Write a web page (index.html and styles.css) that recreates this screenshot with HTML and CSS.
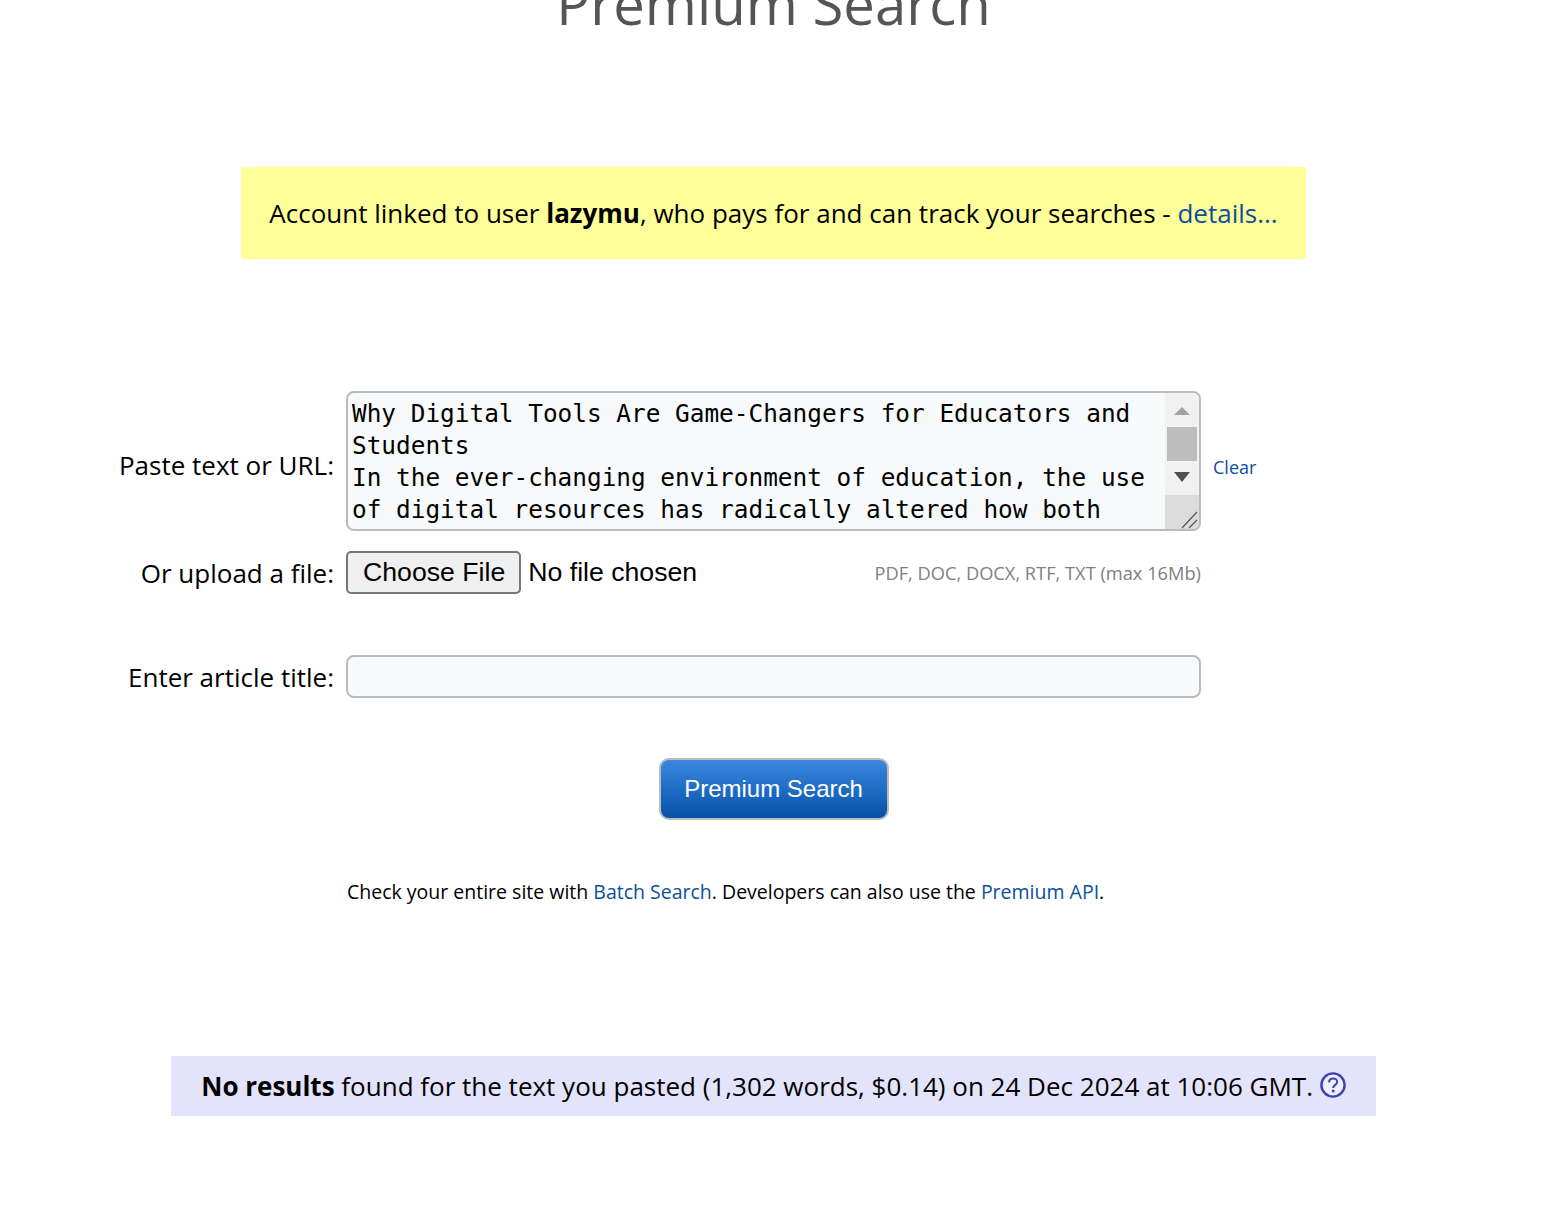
FILE: index.html
```html
<!DOCTYPE html>
<html lang="en">
<head>
<meta charset="utf-8">
<title>Premium Search</title>
<link rel="stylesheet" href="styles.css">
</head>
<body>
<main class="page">
  <h1 class="title">Premium Search</h1>
  <p class="notice">Account linked to user <b>lazymu</b>, who pays for and can track your searches - <a href="#">details...</a></p>
  <form class="form">
    <label class="label label-text" for="text">Paste text or URL:</label>
    <div class="area-box">
      <textarea class="area" id="text" spellcheck="false">Why Digital Tools Are Game-Changers for Educators and Students
In the ever-changing environment of education, the use of digital resources has radically altered how both teachers and students approach learning. Digital tools have become essential in the modern classroom, offering new ways to engage with material, collaborate with peers and track progress over time.</textarea>
      <div class="scrollbar" aria-hidden="true">
        <svg class="sb-btn" viewBox="0 0 34 34" width="34" height="34"><path d="M17 14l8 8H9z" fill="#a3a3a3"/></svg>
        <div class="sb-thumb"></div>
        <svg class="sb-btn" viewBox="0 0 34 34" width="34" height="34"><path d="M9 11h16l-8 10z" fill="#505050"/></svg>
        <svg class="sb-corner" viewBox="0 0 34 34" width="34" height="34"><path d="M17 33L32 17M24 33l8-8" stroke="#555" stroke-width="1.2" fill="none"/></svg>
      </div>
    </div>
    <a class="clear" href="#">Clear</a>

    <label class="label label-file" for="file">Or upload a file:</label>
    <div class="file-row">
      <input class="file" id="file" type="file">
      <span class="hint">PDF, DOC, DOCX, RTF, TXT (max 16Mb)</span>
    </div>

    <label class="label label-title" for="title">Enter article title:</label>
    <input class="title-input" id="title" type="text">
  </form>
  <div class="actions"><button class="submit" type="button">Premium Search</button></div>
  <p class="links">Check your entire site with <a href="#">Batch Search</a>. Developers can also use the <a href="#">Premium API</a>.</p>
  <p class="result"><b>No results</b> found for the text you pasted (1,302 words, $0.14) on 24 Dec 2024 at 10:06 GMT.
    <svg class="help" viewBox="0 0 26 26" width="26" height="26" aria-hidden="true"><circle cx="13" cy="13" r="11.6" fill="#eeeefc" stroke="#4040b4" stroke-width="2.4"/><path d="M9 10.4c.2-2.6 2-4 4.2-4s4 1.4 4 3.4c0 1.6-1 2.5-2.2 3.3-1.2.8-1.8 1.4-1.8 2.9" fill="none" stroke="#4040b4" stroke-width="2"/><circle cx="13.2" cy="19" r="1.5" fill="#4040b4"/></svg>
  </p>
</main>
</body>
</html>
```
FILE: styles.css
```css
* { box-sizing: border-box; }
html, body { margin: 0; padding: 0; background: #fff; }
body { font-family: "Open Sans", sans-serif; color: #000; overflow: hidden; height: 1206px; }
a { color: #0b4f9e; text-decoration: none; }
.page { width: 1547px; display: flow-root; }
.title {
  margin: -29px 0 0;
  text-align: center;
  font-size: 56.3px;
  line-height: 65px;
  font-weight: 400;
  color: #555;
}
.notice {
  width: 1065px;
  height: 92px;
  margin: 131px 0 0 241px;
  background: #ffff99;
  text-align: center;
  font-size: 26px;
  line-height: 92px;
  white-space: nowrap;
}
.form {
  display: grid;
  grid-template-columns: 334px 855px auto;
  column-gap: 12px;
  margin-top: 132px;
  align-items: center;
}
.label { text-align: right; font-size: 26px; line-height: 34px; }
.label-text { margin-top: 8px; }
.area-box {
  display: flex;
  height: 140px;
  border: 2px solid #bbb;
  border-radius: 8px;
  background: #f8f9fa;
  overflow: hidden;
}
.area {
  flex: 1;
  display: block;
  min-width: 0;
  padding: 5px 4px 0;
  border: 0;
  background: transparent;
  font-family: "DejaVu Sans Mono", monospace;
  font-size: 24.4px;
  line-height: 32px;
  color: #000;
  resize: none;
  outline: none;
  overflow: hidden;
}
.scrollbar { flex: none; width: 34px; background: #f1f1f1; display: flex; flex-direction: column; }
.sb-btn, .sb-corner { display: block; flex: none; }
.sb-thumb { flex: none; height: 34px; margin: 0 2px; background: #bdbdbd; }
.sb-corner { background: #dcdcdc; }
.clear { font-size: 18px; margin: 12px 0 0; }
.label-file { margin-top: 21px; }
.file-row {
  margin-top: 19px;
  height: 44px;
  display: flex;
  align-items: center;
  justify-content: space-between;
}
.file { font-family: "Liberation Sans", Arial, sans-serif; font-size: 26.67px; width: 420px; }
.file::file-selector-button {
  font: inherit;
  height: 43px;
  padding: 0 14px 0 15px;
  margin-right: 7px;
  border: 2px solid #767676;
  border-radius: 5px;
  background: #efefef;
  color: #000;
}
.hint { font-size: 18.25px; color: #808080; }
.label-title { margin-top: 61px; grid-column: 1; }
.title-input {
  margin-top: 61px;
  grid-column: 2;
  height: 43px;
  border: 2px solid #bbb;
  border-radius: 8px;
  background: #f8f9fa;
  outline: none;
}
.actions { display: flex; justify-content: center; margin-top: 60px; }
.submit {
  width: 230px;
  height: 62px;
  border: 2px solid #bbb;
  border-radius: 10px;
  background: linear-gradient(#3c87e0, #0352a8);
  color: #fff;
  font-family: "Liberation Sans", Arial, sans-serif;
  font-size: 24px;
  padding: 0;
}
.links { margin: 58px 0 0 347px; font-size: 19.5px; line-height: 27px; }
.result {
  width: 1205px;
  height: 60px;
  margin: 151px 0 0 171px;
  background: #e3e3fb;
  text-align: center;
  font-size: 26px;
  line-height: 60px;
  white-space: nowrap;
}
.help { vertical-align: -2px; }
```
